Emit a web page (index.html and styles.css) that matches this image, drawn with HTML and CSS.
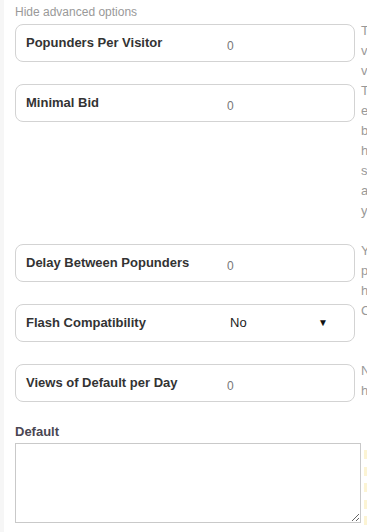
FILE: index.html
```html
<!DOCTYPE html>
<html lang="en">
<head>
  <meta charset="UTF-8">
  <meta name="viewport" content="width=device-width, initial-scale=1.0">
  <title>Advanced options</title>
  <link rel="stylesheet" href="styles.css">
</head>
<body>
  <div class="page">
    <a class="toggle" href="#">Hide advanced options</a>

    <div class="row">
      <div class="field">
        <label for="perVisitor">Popunders Per Visitor</label>
        <input id="perVisitor" type="text" value="0">
      </div>
      <p class="hint">The maximum number of popunders<br>visitor will see in one day, zero<br>value means there is no limit.</p>
    </div>

    <div class="row row-tall">
      <div class="field">
        <label for="minBid">Minimal Bid</label>
        <input id="minBid" type="text" value="0">
      </div>
      <p class="hint">The minimal bid you accept. Ads<br>eCPM lower than this will not<br>be shown on your site. Setting it too<br>high will reduce the fill rate, and<br>setting it too low may allow low<br>a quality campaigns to be shown on<br>your site.</p>
    </div>

    <div class="row">
      <div class="field">
        <label for="delay">Delay Between Popunders</label>
        <input id="delay" type="text" value="0">
      </div>
      <p class="hint">You can set the delay between two<br>popunders shown to the visitor, in<br>hours.</p>
    </div>

    <div class="row">
      <div class="field">
        <label for="flash">Flash Compatibility</label>
        <div class="select-wrap">
          <select id="flash">
            <option>No</option>
            <option>Yes</option>
          </select>
          <span class="arrow">▼</span>
        </div>
      </div>
      <p class="hint">Choose Yes if your site uses Flash.</p>
    </div>

    <div class="row">
      <div class="field">
        <label for="defaultViews">Views of Default per Day</label>
        <input id="defaultViews" type="text" value="0">
      </div>
      <p class="hint">Number of times the default code is<br>how to one visitor per day.</p>
    </div>

    <label class="area-label" for="defaultCode">Default</label>
    <div class="area-row">
      <textarea id="defaultCode"></textarea>
      <p class="note"><span>Paste the HTML code that is shown when there is no campaign available for the visitor. It is used as a fallback and should be a plain snippet.</span></p>
    </div>
  </div>
</body>
</html>
```

FILE: styles.css
```css
:root {
  --borda: #d3d3d3;
  --texto: #333333;
  --cinza: #999999;
  --cinza-valor: #777777;
  --amarelo: #fcf4d4;
}

html, body {
  overflow: hidden;
}

body {
  margin: 0;
  background-color: #f6f6f6;
  font-family: "Liberation Sans", Arial, sans-serif;
  color: var(--texto);
}

.page {
  margin-left: 4px;
  padding: 5px 0 0 11px;
  background-color: #ffffff;
  min-height: 532px;
  width: 1000px;
}

.toggle {
  display: block;
  font-size: 12px;
  line-height: 14px;
  color: var(--cinza);
  text-decoration: none;
  margin-bottom: 5px;
}

/* Linhas de campo + descricao */
.row {
  display: flex;
  align-items: flex-start;
  min-height: 60px;
}

.row-tall {
  padding-bottom: 20px;
}

.field {
  display: flex;
  align-items: center;
  box-sizing: border-box;
  width: 340px;
  height: 38px;
  padding-left: 10px;
  border: 1px solid var(--borda);
  border-radius: 8px;
  flex-shrink: 0;
}

.field label {
  width: 196px;
  font-size: 13px;
  font-weight: bold;
  margin-top: -2px;
}

.field input {
  width: 100px;
  border: none;
  outline: none;
  padding: 6px 0 0 5px;
  font-family: inherit;
  font-size: 12px;
  color: var(--cinza-valor);
  background: transparent;
}

.select-wrap {
  display: flex;
  align-items: center;
  width: 112px;
  margin-top: -2px;
}

.select-wrap select {
  appearance: none;
  -webkit-appearance: none;
  border: none;
  outline: none;
  background: transparent;
  font-family: inherit;
  font-size: 13px;
  color: #222222;
  padding: 0 0 0 8px;
  width: 96px;
}

.arrow {
  font-size: 10px;
  color: #111111;
}

.hint {
  margin: -3px 0 3px 6px;
  font-size: 13px;
  line-height: 20px;
  color: var(--cinza);
  white-space: nowrap;
}

/* Campo de texto */
.area-label {
  display: block;
  font-size: 13px;
  font-weight: bold;
  line-height: 16px;
  color: #4a4652;
  margin-bottom: 3px;
}

.area-row {
  display: flex;
  align-items: flex-start;
}

.area-row textarea {
  box-sizing: border-box;
  width: 346px;
  height: 80px;
  border: 1px solid #c9c9c9;
  margin: 0;
  flex-shrink: 0;
}

.note {
  width: 120px;
  margin: 4px 0 0 3px;
  font-size: 8px;
  line-height: 16.5px;
}

.note span {
  background-color: var(--amarelo);
  color: var(--amarelo);
}
```
